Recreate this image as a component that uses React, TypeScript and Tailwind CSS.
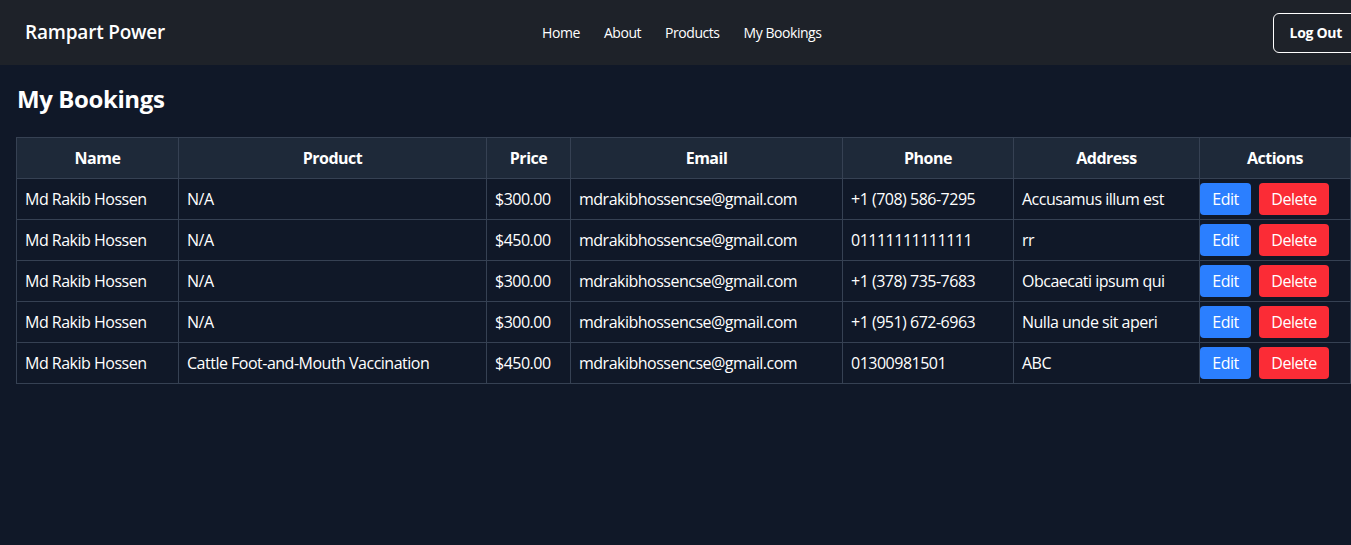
import React from "react";

const rows = [
  { name: "Md Rakib Hossen", product: "N/A", price: "$300.00", email: "mdrakibhossencse@gmail.com", phone: "+1 (708) 586-7295", address: "Accusamus illum est" },
  { name: "Md Rakib Hossen", product: "N/A", price: "$450.00", email: "mdrakibhossencse@gmail.com", phone: "01111111111111", address: "rr" },
  { name: "Md Rakib Hossen", product: "N/A", price: "$300.00", email: "mdrakibhossencse@gmail.com", phone: "+1 (378) 735-7683", address: "Obcaecati ipsum qui" },
  { name: "Md Rakib Hossen", product: "N/A", price: "$300.00", email: "mdrakibhossencse@gmail.com", phone: "+1 (951) 672-6963", address: "Nulla unde sit aperi" },
  { name: "Md Rakib Hossen", product: "Cattle Foot-and-Mouth Vaccination", price: "$450.00", email: "mdrakibhossencse@gmail.com", phone: "01300981501", address: "ABC" },
];

export default function App() {
  return (
    <div className="w-[1351px] h-[545px] overflow-hidden bg-[#101828] text-white font-['Open_Sans',sans-serif]">
      <nav className="h-[65px] bg-[#1e2229] flex items-center pl-[25px]">
        <span className="text-[19px] font-semibold tracking-[-0.2px]">Rampart Power</span>
        <div className="ml-[377px] flex gap-6 text-[14px] tracking-[-0.45px]">
          <a>Home</a>
          <a>About</a>
          <a>Products</a>
          <a>My Bookings</a>
        </div>
        <button className="ml-auto -mr-[8px] h-[40px] px-4 border border-white rounded-md text-[14px] font-bold tracking-[-0.3px]">Log Out</button>
      </nav>
      <main className="px-4 pt-[18px]">
        <h2 className="text-2xl font-bold mb-[22px] pl-px tracking-[-0.4px]">My Bookings</h2>
        <table className="table-fixed w-[1334px] border-collapse text-[16px] tracking-[-0.5px]">
          <colgroup>
            <col className="w-[162px]" />
            <col className="w-[308px]" />
            <col className="w-[84px]" />
            <col className="w-[272px]" />
            <col className="w-[171px]" />
            <col className="w-[186px]" />
            <col className="w-[151px]" />
          </colgroup>
          <thead>
            <tr className="bg-[#1e2939] h-[41px]">
              {["Name", "Product", "Price", "Email", "Phone", "Address", "Actions"].map((h) => (
                <th key={h} className="border border-[#364153] font-bold text-center px-2 py-0">{h}</th>
              ))}
            </tr>
          </thead>
          <tbody>
            {rows.map((r, i) => (
              <tr key={i} className="h-[41px]">
                <td className="border border-[#364153] px-2 whitespace-nowrap">{r.name}</td>
                <td className="border border-[#364153] px-2 whitespace-nowrap">{r.product}</td>
                <td className="border border-[#364153] px-2 whitespace-nowrap">{r.price}</td>
                <td className="border border-[#364153] px-2 whitespace-nowrap">{r.email}</td>
                <td className="border border-[#364153] px-2 whitespace-nowrap">{r.phone}</td>
                <td className="border border-[#364153] px-2 whitespace-nowrap">{r.address}</td>
                <td className="border border-[#364153] p-0">
                  <div className="flex gap-2">
                    <button className="bg-[#2b7fff] rounded h-[32px] w-[51px] text-center">Edit</button>
                    <button className="bg-[#fb2c36] rounded h-[32px] w-[70px] text-center">Delete</button>
                  </div>
                </td>
              </tr>
            ))}
          </tbody>
        </table>
      </main>
    </div>
  );
}
